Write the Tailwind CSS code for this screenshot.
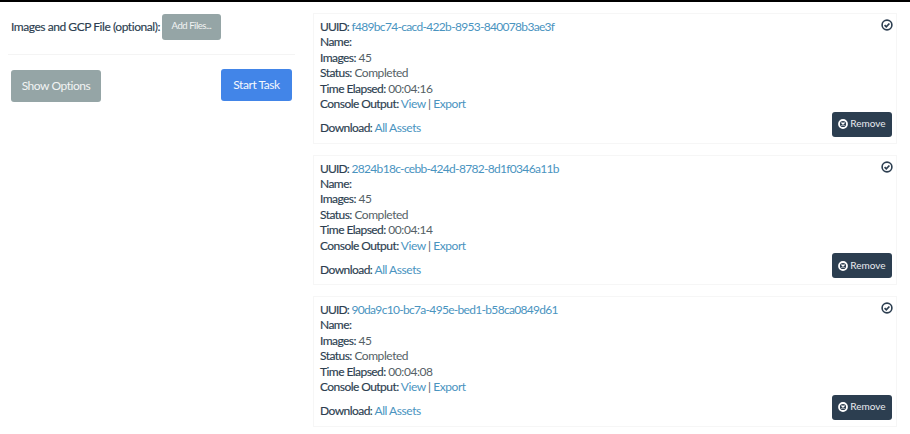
<!DOCTYPE html>
<html lang="en">
<head>
<meta charset="UTF-8">
<script src="https://cdn.jsdelivr.net/npm/@tailwindcss/browser@4"></script>
<title>Tasks</title>
</head>
<body class="bg-white font-['Lato',sans-serif] text-[12px] tracking-[-0.45px] text-[#555f66] h-[434px] overflow-hidden">
  <div class="h-[2px] bg-black"></div>
  <div class="flex">
    <!-- left column -->
    <div class="w-[313px] shrink-0 pl-[11px] pr-[17px]">
      <div class="flex items-center h-[38px] pt-[11px]">
        <span class="text-[#2c3e50] [-webkit-text-stroke:0.15px_#2c3e50]">Images and GCP File (optional):</span>
        <button class="ml-[2px] w-[59px] h-[26px] rounded-[3px] bg-[#95a5a6] text-[#f2f4f4] text-[9.5px]">Add Files...</button>
      </div>
      <div class="mt-[14px] border-t border-[#f4f4f4] -ml-[3px] mr-[1px]"></div>
      <div class="mt-[14px] mr-[4px] flex justify-between items-start">
        <button class="w-[90px] h-[32px] mt-[1px] rounded-[3px] bg-[#95a5a6] text-[#f2f4f4]">Show Options</button>
        <button class="w-[71px] h-[32px] rounded-[3px] bg-[#4285e8] text-[#f4f8fe]">Start Task</button>
      </div>
    </div>
    <!-- task list -->
    <div class="w-[584px] pt-[11px] flex flex-col gap-[11px]">

      <div class="relative h-[130.5px] border border-[#f6f6f6] pl-[6px] pt-[5px] leading-[15.4px]">
        <div><b class="font-normal text-[#2c3e50] tracking-[-0.85px] [-webkit-text-stroke:0.15px_#2c3e50]">UUID:</b> <a class="text-[#4a94bf] tracking-[-0.69px]" href="#">f489bc74-cacd-422b-8953-840078b3ae3f</a></div>
        <div><b class="font-normal text-[#2c3e50] tracking-[-0.55px] [-webkit-text-stroke:0.15px_#2c3e50]">Name:</b></div>
        <div><b class="font-normal text-[#2c3e50] tracking-[-0.55px] [-webkit-text-stroke:0.15px_#2c3e50]">Images:</b> 45</div>
        <div><b class="font-normal text-[#2c3e50] tracking-[-0.55px] [-webkit-text-stroke:0.15px_#2c3e50]">Status:</b> Completed</div>
        <div><b class="font-normal text-[#2c3e50] tracking-[-0.55px] [-webkit-text-stroke:0.15px_#2c3e50]">Time Elapsed:</b> 00:04:16</div>
        <div><b class="font-normal text-[#2c3e50] tracking-[-0.55px] [-webkit-text-stroke:0.15px_#2c3e50]">Console Output:</b> <a class="text-[#4a94bf]" href="#">View</a> | <a class="text-[#4a94bf]" href="#">Export</a></div>
        <div class="mt-[9px]"><b class="font-normal text-[#2c3e50] tracking-[-0.55px] [-webkit-text-stroke:0.15px_#2c3e50]">Download:</b> <a class="text-[#4a94bf]" href="#">All Assets</a></div>
        <svg class="absolute right-[3px] top-[5px]" width="12" height="12" viewBox="0 0 12 12" fill="none" stroke="#2c3e50"><circle cx="6" cy="6" r="4.9" stroke-width="1.6"/><path d="M3.6 6.1 5.3 7.8 8.4 4.5" stroke-width="1.7"/></svg>
        <button class="absolute right-[4px] bottom-[6px] w-[60px] h-[25px] rounded-[3px] bg-[#2c3e50] text-[#e8ecef] text-[10px] tracking-normal flex items-center justify-center gap-[2px]">
          <svg width="10" height="10" viewBox="0 0 10 10" fill="none" stroke="#fff"><circle cx="5" cy="5" r="4" stroke-width="1.8"/><path d="M3.5 3.5 6.5 6.5M6.5 3.5 3.5 6.5" stroke-width="1.4"/></svg>Remove
        </button>
      </div>

      <div class="relative h-[130.5px] border border-[#f6f6f6] pl-[6px] pt-[5px] leading-[15.4px]">
        <div><b class="font-normal text-[#2c3e50] tracking-[-0.85px] [-webkit-text-stroke:0.15px_#2c3e50]">UUID:</b> <a class="text-[#4a94bf] tracking-[-0.69px]" href="#">2824b18c-cebb-424d-8782-8d1f0346a11b</a></div>
        <div><b class="font-normal text-[#2c3e50] tracking-[-0.55px] [-webkit-text-stroke:0.15px_#2c3e50]">Name:</b></div>
        <div><b class="font-normal text-[#2c3e50] tracking-[-0.55px] [-webkit-text-stroke:0.15px_#2c3e50]">Images:</b> 45</div>
        <div><b class="font-normal text-[#2c3e50] tracking-[-0.55px] [-webkit-text-stroke:0.15px_#2c3e50]">Status:</b> Completed</div>
        <div><b class="font-normal text-[#2c3e50] tracking-[-0.55px] [-webkit-text-stroke:0.15px_#2c3e50]">Time Elapsed:</b> 00:04:14</div>
        <div><b class="font-normal text-[#2c3e50] tracking-[-0.55px] [-webkit-text-stroke:0.15px_#2c3e50]">Console Output:</b> <a class="text-[#4a94bf]" href="#">View</a> | <a class="text-[#4a94bf]" href="#">Export</a></div>
        <div class="mt-[9px]"><b class="font-normal text-[#2c3e50] tracking-[-0.55px] [-webkit-text-stroke:0.15px_#2c3e50]">Download:</b> <a class="text-[#4a94bf]" href="#">All Assets</a></div>
        <svg class="absolute right-[3px] top-[5px]" width="12" height="12" viewBox="0 0 12 12" fill="none" stroke="#2c3e50"><circle cx="6" cy="6" r="4.9" stroke-width="1.6"/><path d="M3.6 6.1 5.3 7.8 8.4 4.5" stroke-width="1.7"/></svg>
        <button class="absolute right-[4px] bottom-[6px] w-[60px] h-[25px] rounded-[3px] bg-[#2c3e50] text-[#e8ecef] text-[10px] tracking-normal flex items-center justify-center gap-[2px]">
          <svg width="10" height="10" viewBox="0 0 10 10" fill="none" stroke="#fff"><circle cx="5" cy="5" r="4" stroke-width="1.8"/><path d="M3.5 3.5 6.5 6.5M6.5 3.5 3.5 6.5" stroke-width="1.4"/></svg>Remove
        </button>
      </div>

      <div class="relative h-[130.5px] border border-[#f6f6f6] pl-[6px] pt-[5px] leading-[15.4px]">
        <div><b class="font-normal text-[#2c3e50] tracking-[-0.85px] [-webkit-text-stroke:0.15px_#2c3e50]">UUID:</b> <a class="text-[#4a94bf] tracking-[-0.69px]" href="#">90da9c10-bc7a-495e-bed1-b58ca0849d61</a></div>
        <div><b class="font-normal text-[#2c3e50] tracking-[-0.55px] [-webkit-text-stroke:0.15px_#2c3e50]">Name:</b></div>
        <div><b class="font-normal text-[#2c3e50] tracking-[-0.55px] [-webkit-text-stroke:0.15px_#2c3e50]">Images:</b> 45</div>
        <div><b class="font-normal text-[#2c3e50] tracking-[-0.55px] [-webkit-text-stroke:0.15px_#2c3e50]">Status:</b> Completed</div>
        <div><b class="font-normal text-[#2c3e50] tracking-[-0.55px] [-webkit-text-stroke:0.15px_#2c3e50]">Time Elapsed:</b> 00:04:08</div>
        <div><b class="font-normal text-[#2c3e50] tracking-[-0.55px] [-webkit-text-stroke:0.15px_#2c3e50]">Console Output:</b> <a class="text-[#4a94bf]" href="#">View</a> | <a class="text-[#4a94bf]" href="#">Export</a></div>
        <div class="mt-[9px]"><b class="font-normal text-[#2c3e50] tracking-[-0.55px] [-webkit-text-stroke:0.15px_#2c3e50]">Download:</b> <a class="text-[#4a94bf]" href="#">All Assets</a></div>
        <svg class="absolute right-[3px] top-[5px]" width="12" height="12" viewBox="0 0 12 12" fill="none" stroke="#2c3e50"><circle cx="6" cy="6" r="4.9" stroke-width="1.6"/><path d="M3.6 6.1 5.3 7.8 8.4 4.5" stroke-width="1.7"/></svg>
        <button class="absolute right-[4px] bottom-[6px] w-[60px] h-[25px] rounded-[3px] bg-[#2c3e50] text-[#e8ecef] text-[10px] tracking-normal flex items-center justify-center gap-[2px]">
          <svg width="10" height="10" viewBox="0 0 10 10" fill="none" stroke="#fff"><circle cx="5" cy="5" r="4" stroke-width="1.8"/><path d="M3.5 3.5 6.5 6.5M6.5 3.5 3.5 6.5" stroke-width="1.4"/></svg>Remove
        </button>
      </div>

    </div>
  </div>
</body>
</html>
